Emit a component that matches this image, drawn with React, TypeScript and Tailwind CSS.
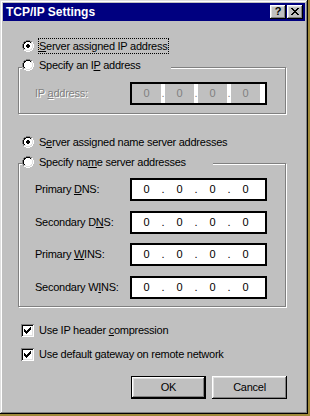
import React from 'react';

// pixel maps for the little win95 glyphs
const RING = [
  '....OOOO....',
  '..OOIIIIOO..',
  '.OIIFFFFIIO.',
  '.OIFFFFFFIO.',
  'OIFFFFFFFFIO',
  'OIFFFFFFFFIO',
  'OIFFFFFFFFIO',
  'OIFFFFFFFFIO',
  '.OIFFFFFFIO.',
  '.OIIFFFFIIO.',
  '..OOIIIIOO..',
  '....OOOO....',
];

const CHECK = [
  '......X',
  '.....XX',
  'X...XXX',
  'XX.XXX.',
  'XXXXX..',
  '.XXX...',
  '..X....',
];

const CLOSE = [
  'XX....XX',
  '.XX..XX.',
  '..XXXX..',
  '...XX...',
  '..XXXX..',
  '.XX..XX.',
  'XX....XX',
];

const PixelMap = ({ rows, color = '#000' }: { rows: string[]; color?: string }) => {
  const w = rows[0].length;
  const h = rows.length;
  const cells: React.ReactNode[] = [];
  rows.forEach((row, r) =>
    row.split('').forEach((ch, c) => {
      if (ch === 'X') cells.push(<rect key={`${r}-${c}`} x={c} y={r} width={1} height={1} fill={color} />);
    })
  );
  return (
    <svg width={w} height={h} viewBox={`0 0 ${w} ${h}`} shapeRendering="crispEdges" className="shrink-0 block">
      {cells}
    </svg>
  );
};

const isDot = (r: number, c: number) => {
  if (r < 4 || r > 7 || c < 4 || c > 7) return false;
  if ((r === 4 || r === 7) && (c === 4 || c === 7)) return false;
  return true;
};

const Radio = ({ checked }: { checked?: boolean }) => {
  const cells: React.ReactNode[] = [];
  RING.forEach((row, r) =>
    row.split('').forEach((ch, c) => {
      if (ch === '.') return;
      const dark = r + c < 11;
      let fill = '#fff';
      if (ch === 'O') fill = dark ? '#808080' : '#fff';
      if (ch === 'I') fill = dark ? '#000' : '#dfdfdf';
      if (checked && isDot(r, c)) fill = '#000';
      cells.push(<rect key={`${r}-${c}`} x={c} y={r} width={1} height={1} fill={fill} />);
    })
  );
  return (
    <svg width={12} height={12} viewBox="0 0 12 12" shapeRendering="crispEdges" className="shrink-0 block">
      {cells}
    </svg>
  );
};

const Checkbox = () => (
  <div className="w-[13px] h-[13px] shrink-0 bg-white shadow-[inset_1px_1px_#808080,inset_-1px_-1px_#fff,inset_2px_2px_#000,inset_-2px_-2px_#dfdfdf] flex items-center justify-center">
    <PixelMap rows={CHECK} />
  </div>
);

const IpField = ({ disabled }: { disabled?: boolean }) => (
  <div className={`w-[137px] h-[23px] border-2 border-black bg-white flex ${disabled ? 'text-[#808080]' : 'text-black'}`}>
    {[0, 1, 2, 3].map((i) => (
      <React.Fragment key={i}>
        {i > 0 && <span className="w-[4px] flex items-center justify-center">.</span>}
        <span className={`w-[29px] flex items-center justify-center ${disabled ? 'bg-[#c0c0c0]' : 'bg-white'}`}>0</span>
      </React.Fragment>
    ))}
  </div>
);

const FieldRow = ({ label, className }: { label: React.ReactNode; className?: string }) => (
  <div className={`flex items-center pl-[16px] ${className ?? ''}`}>
    <span className="w-[95px]">{label}</span>
    <IpField />
  </div>
);

const bevel = 'shadow-[inset_-1px_-1px_#000,inset_1px_1px_#fff,inset_-2px_-2px_#808080,inset_2px_2px_#dfdfdf]';
const etched = 'border border-[#808080] shadow-[1px_1px_0_#fff,inset_1px_1px_0_#fff]';

const App: React.FC = () => {
  return (
    <div className="w-[310px] h-[416px] bg-[#a08a3a] font-['Liberation_Sans',Arial,sans-serif] text-[11px] tracking-[-0.25px] text-black">
      <div className="w-[308px] h-[414px] bg-[#c0c0c0] pt-[3px] flex flex-col shadow-[inset_-1px_-1px_#000,inset_1px_1px_#dfdfdf,inset_-2px_-2px_#808080,inset_2px_2px_#fff]">
        {/* title bar */}
        <div className="mx-[3px] h-[18px] bg-[#000080] flex items-center pl-[3px] pr-[2px]">
          <span className="text-white font-bold text-[12px] leading-none tracking-normal">TCP/IP Settings</span>
          <div className="ml-auto flex gap-[1px]">
            <div className={`w-[16px] h-[14px] bg-[#c0c0c0] ${bevel} flex items-center justify-center font-bold text-[11px] leading-none pb-[1px]`}>?</div>
            <div className={`w-[16px] h-[14px] bg-[#c0c0c0] ${bevel} flex items-center justify-center pb-[1px]`}>
              <PixelMap rows={CLOSE} />
            </div>
          </div>
        </div>

        {/* ip address */}
        <div className="mt-[17px] ml-[22px] h-[16px] flex items-center">
          <Radio checked />
          <span className="ml-[4px] h-full flex items-center border border-dotted border-black pr-[1px]">
            <span className="underline">S</span>erver assigned IP address
          </span>
        </div>
        <div className="mt-[3px] mb-[-6px] ml-[22px] w-[149px] h-[16px] flex items-center relative z-10 bg-[#c0c0c0]">
          <Radio />
          <span className="ml-[5px]">
            Specify an I<span className="underline">P</span> address
          </span>
        </div>
        <div className={`ml-[18px] w-[268px] h-[47px] ${etched} pt-[14px]`}>
          <div className="flex items-center pl-[16px]">
            <span className="w-[95px] text-[#808080] [text-shadow:1px_1px_0_#fff]">
              IP <span className="underline">a</span>ddress:
            </span>
            <IpField disabled />
          </div>
        </div>

        {/* name servers */}
        <div className="mt-[20px] ml-[22px] h-[16px] flex items-center">
          <Radio checked />
          <span className="ml-[5px]">
            S<span className="underline">e</span>rver assigned name server addresses
          </span>
        </div>
        <div className="mt-[4px] mb-[-7px] ml-[22px] w-[191px] h-[16px] flex items-center relative z-10 bg-[#c0c0c0]">
          <Radio />
          <span className="ml-[5px]">
            Specify na<span className="underline">m</span>e server addresses
          </span>
        </div>
        <div className={`ml-[18px] w-[268px] h-[144px] ${etched} pt-[14px]`}>
          <FieldRow label={<>Primary <span className="underline">D</span>NS:</>} />
          <FieldRow className="mt-[10px]" label={<>Secondary D<span className="underline">N</span>S:</>} />
          <FieldRow className="mt-[9px]" label={<>Primary <span className="underline">W</span>INS:</>} />
          <FieldRow className="mt-[10px]" label={<>Secondary W<span className="underline">I</span>NS:</>} />
        </div>

        {/* options */}
        <div className="mt-[15px] ml-[21px] h-[16px] flex items-center">
          <Checkbox />
          <span className="ml-[5px]">
            Use IP header <span className="underline">c</span>ompression
          </span>
        </div>
        <div className="mt-[8px] ml-[21px] h-[16px] flex items-center">
          <Checkbox />
          <span className="ml-[5px]">
            Use default <span className="underline">g</span>ateway on remote network
          </span>
        </div>

        <div className="mt-[14px] ml-[131px] flex gap-[6px]">
          <div className="w-[75px] h-[23px] border border-black">
            <div className={`w-full h-full ${bevel} flex items-center justify-center`}>OK</div>
          </div>
          <div className={`w-[75px] h-[23px] ${bevel} flex items-center justify-center`}>Cancel</div>
        </div>
      </div>
    </div>
  );
};

export default App;
